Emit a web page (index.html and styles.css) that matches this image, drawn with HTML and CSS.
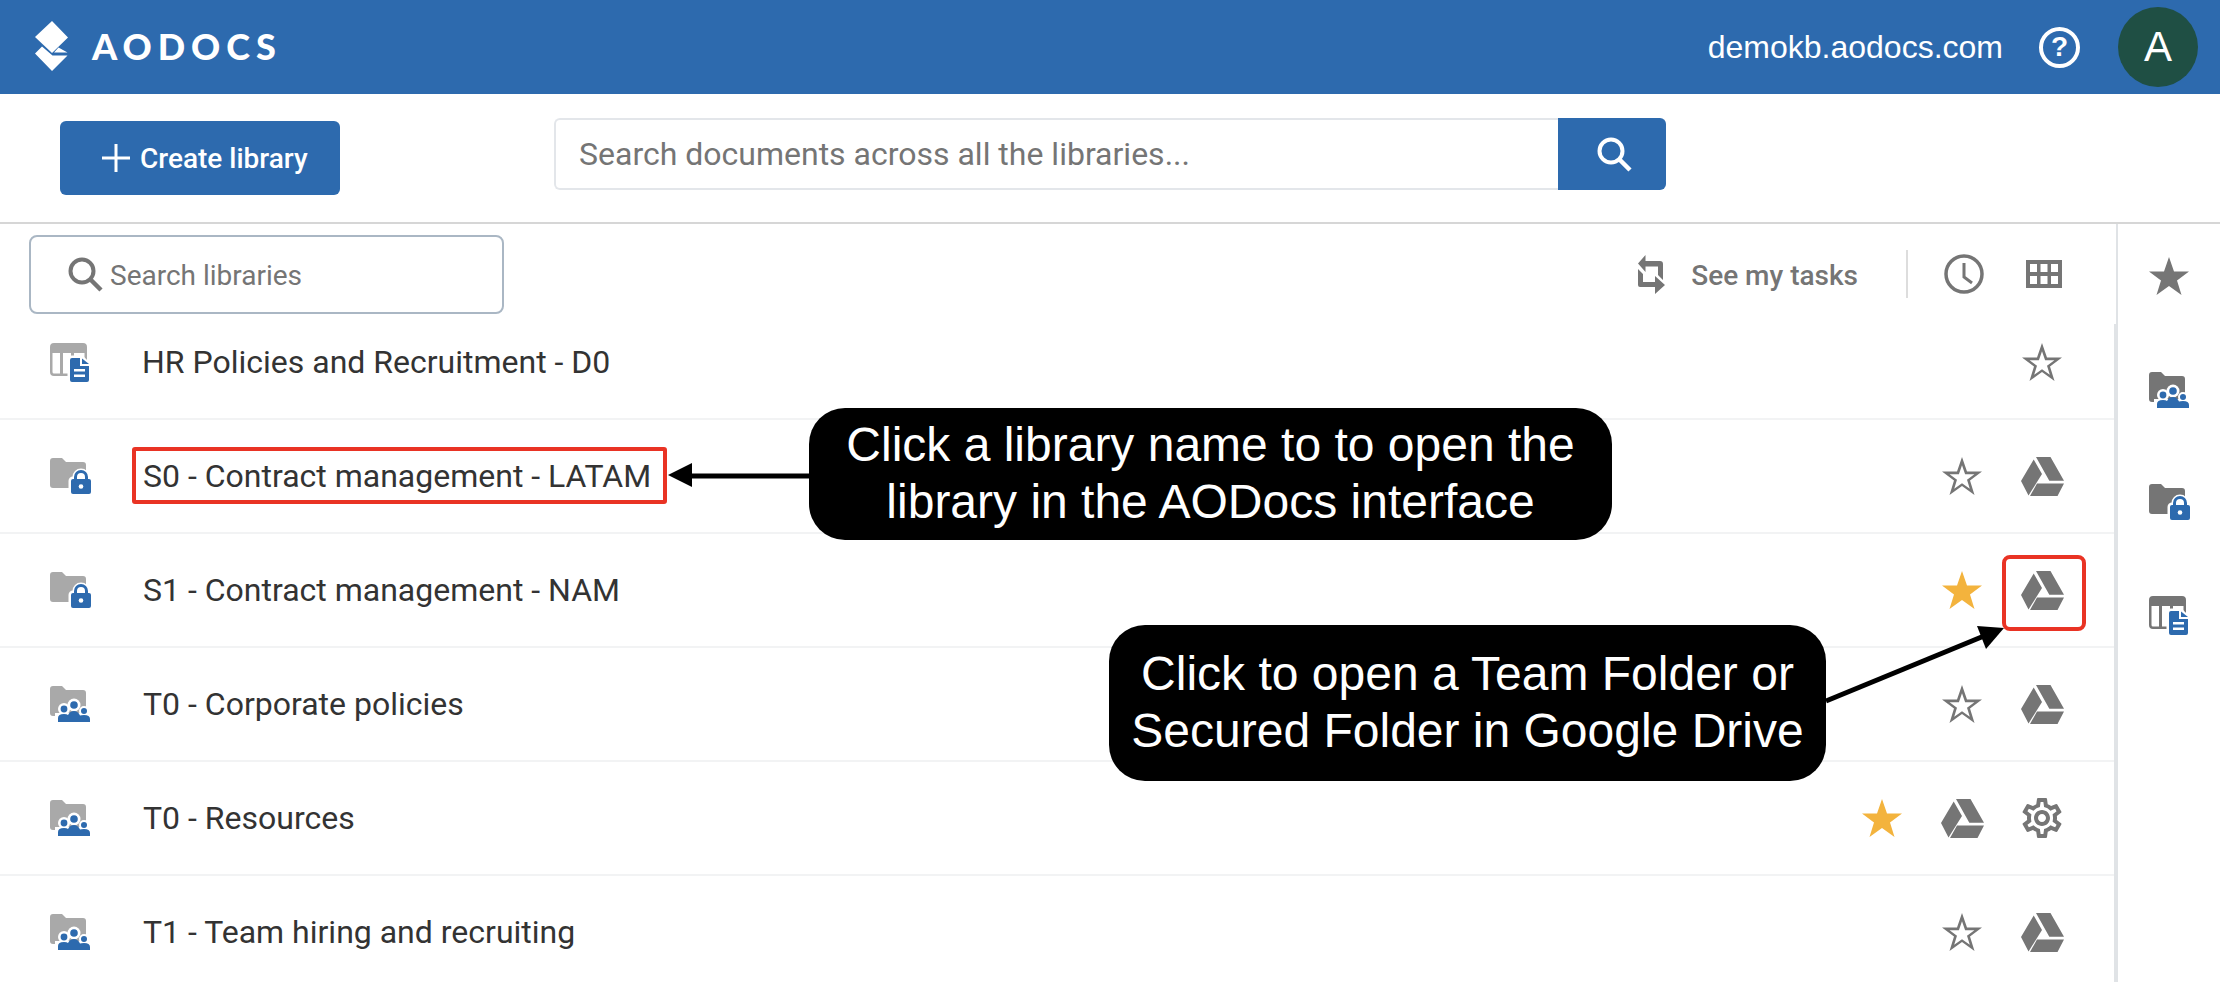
FILE: index.html
```html
<!DOCTYPE html>
<html>
<head>
<meta charset="utf-8">
<title>AODocs libraries</title>
<link rel="stylesheet" href="styles.css">
</head>
<body>

<svg class="defs" width="0" height="0">
  <symbol id="i-star" viewBox="0 0 40 38"><path fill-rule="evenodd" d="M20 0L25 14.5H40L28 23.5L32.5 38L20 29L7.5 38L12 23.5L0 14.5H15ZM20 8.2L16.9 17.2H7.6L15 22.7L12.2 31.7L20 26.2L27.8 31.7L25 22.7L32.4 17.2H23.1Z"/></symbol>
  <symbol id="i-star-full" viewBox="0 0 40 38"><path d="M20 0L25 14.5H40L28 23.5L32.5 38L20 29L7.5 38L12 23.5L0 14.5H15Z"/></symbol>
  <symbol id="i-drive" viewBox="0 0 43 39"><path d="M15 0H29.500L43 23.700H28.300ZM12.700 2.500L21 17L7.500 38.500L0 24ZM16 26.500H43L36.500 39H9Z"/></symbol>
  <symbol id="i-gear" viewBox="0 0 24 24"><path d="M19.43 12.98c.04-.32.07-.64.07-.98 0-.34-.03-.66-.07-.98l2.11-1.65c.19-.15.24-.42.12-.64l-2-3.46c-.09-.16-.26-.25-.44-.25-.06 0-.12.01-.17.03l-2.49 1c-.52-.4-1.08-.73-1.69-.98l-.38-2.65C14.46 2.18 14.25 2 14 2h-4c-.25 0-.46.18-.49.42l-.38 2.65c-.61.25-1.17.59-1.69.98l-2.49-1c-.06-.02-.12-.03-.18-.03-.17 0-.34.09-.43.25l-2 3.46c-.13.22-.07.49.12.64l2.11 1.65c-.04.32-.07.65-.07.98 0 .33.03.66.07.98l-2.11 1.65c-.19.15-.24.42-.12.64l2 3.46c.09.16.26.25.44.25.06 0 .12-.01.17-.03l2.49-1c.52.4 1.08.73 1.69.98l.38 2.65c.03.24.24.42.49.42h4c.25 0 .46-.18.49-.42l.38-2.65c.61-.25 1.17-.59 1.69-.98l2.49 1c.06.02.12.03.18.03.17 0 .34-.09.43-.25l2-3.46c.12-.22.07-.49-.12-.64l-2.11-1.65zm-1.98-1.71c.04.31.05.52.05.73 0 .21-.02.43-.05.73l-.14 1.13.89.7 1.08.84-.7 1.21-1.27-.51-1.04-.42-.9.68c-.43.32-.84.56-1.25.73l-1.06.43-.16 1.13-.2 1.35h-1.4l-.19-1.35-.16-1.13-1.06-.43c-.43-.18-.83-.41-1.23-.71l-.91-.7-1.06.43-1.27.51-.7-1.21 1.08-.84.89-.7-.14-1.13c-.03-.31-.05-.54-.05-.74s.02-.43.05-.73l.14-1.13-.89-.7-1.08-.84.7-1.21 1.27.51 1.04.42.9-.68c.43-.32.84-.56 1.25-.73l1.06-.43.16-1.13.2-1.35h1.39l.19 1.35.16 1.13 1.06.43c.43.18.83.41 1.23.71l.91.7 1.06-.43 1.27-.51.7 1.21-1.07.85-.89.7.14 1.13zM12 8c-2.21 0-4 1.79-4 4s1.79 4 4 4 4-1.79 4-4-1.79-4-4-4zm0 6c-1.1 0-2-.9-2-2s.9-2 2-2 2 .9 2 2-.9 2-2 2z"/></symbol>
  <symbol id="i-lock" viewBox="0 0 41 36">
    <path d="M3 0H12L16 4H33Q36 4 36 7V27Q36 30 33 30H3Q0 30 0 27V3Q0 0 3 0Z"/>
    <g stroke="#fff" stroke-width="5" fill="#fff"><rect x="21" y="21" width="20" height="14" rx="2"/><path d="M25 21V19A6 6 0 0 1 37 19V21Z"/></g>
    <rect x="21" y="21" width="20" height="15" rx="2" fill="#2d6aae"/>
    <path d="M25.500 22V19A5.500 5.500 0 0 1 36.500 19V22" fill="none" stroke="#2d6aae" stroke-width="3"/>
    <circle cx="31" cy="28.500" r="2.300" fill="#fff"/>
  </symbol>
  <symbol id="i-team" viewBox="0 0 41 36">
    <path d="M3 0H12L16 4H33Q36 4 36 7V27Q36 30 33 30H3Q0 30 0 27V3Q0 0 3 0Z"/>
    <g fill="#fff"><circle cx="14" cy="23" r="6"/><circle cx="24" cy="19" r="6.500"/><circle cx="34" cy="25" r="5"/><rect x="5" y="27" width="36" height="9"/></g>
    <g fill="#2d6aae">
      <circle cx="14" cy="23" r="3.400"/><circle cx="24" cy="19" r="3.800"/><circle cx="34" cy="25" r="3"/>
      <path d="M8 36V32Q8 28 14 28Q17 28 18 29Q20 25 24 25Q28 25 30 29.500Q31 29 34 29Q40 29 40 33V36Z"/>
    </g>
  </symbol>
  <symbol id="i-table" viewBox="0 0 40 39">
    <path fill-rule="evenodd" d="M4 0H33Q37 0 37 4V29Q37 33 33 33H4Q0 33 0 29V4Q0 0 4 0ZM2.500 10V29Q2.500 30.500 4 30.500H10V10ZM13 10V30.500H21V10ZM24 10V30.500H33Q34.500 30.500 34.500 29V10Z"/>
    <path d="M19 17Q19 14 22 14H32L40 22V36Q40 39 37 39H22Q19 39 19 36Z" stroke="#fff" stroke-width="3" fill="#fff"/>
    <path d="M20 17Q20 15 22 15H30V23H39V37Q39 39 37 39H22Q20 39 20 37Z" fill="#2d6aae"/>
    <path d="M32 15.500L39 21H32Z" fill="#2d6aae"/>
    <rect x="24" y="26" width="11" height="2.500" fill="#fff"/><rect x="24" y="31.500" width="11" height="2.500" fill="#fff"/>
  </symbol>
  <symbol id="i-search" viewBox="0 0 35 35"><circle cx="14" cy="14" r="11.500" fill="none" stroke="currentColor" stroke-width="4"/><path d="M22.500 22.500L33 33" stroke="currentColor" stroke-width="4.500" fill="none"/></symbol>
</svg>

<div class="header">
  <div class="brand">
    <svg class="logo" viewBox="0 0 34 50" width="34" height="50"><path fill="#fff" d="M17 0L33 16.500L17 32L0 16ZM0 32.500L7 25.500L17.500 34.500H32.500L17 50ZM23.500 26.500L32.500 31.500H19Z"/></svg>
    <span class="wordmark">AODOCS</span>
  </div>
  <div class="header-right">
    <span class="domain">demokb.aodocs.com</span>
    <span class="help">?</span>
    <span class="avatar">A</span>
  </div>
</div>

<div class="topbar">
  <div class="create-btn">
    <svg class="plus" viewBox="0 0 28 28" width="28" height="28"><path d="M14 0V28M0 14H28" stroke="#fff" stroke-width="3"/></svg>
    <span>Create library</span>
  </div>
  <div class="search">
    <div class="search-box">Search documents across all the libraries...</div>
    <div class="search-go"><svg width="35" height="35"><use href="#i-search"/></svg></div>
  </div>
</div>

<div class="content">
  <div class="main">
    <div class="tools">
      <div class="filter">
        <svg width="35" height="35"><use href="#i-search"/></svg>
        <span>Search libraries</span>
      </div>
      <div class="tools-right">
        <svg class="tasks-icon" viewBox="7 5 29 41" width="29" height="41"><path d="M8 14.500L15.500 6V12H30Q33 12 33 15V31L28 26V17.500H15.500V23ZM8 20L13 25V33H25V27L35 36L25 45V38H10Q8 38 8 36Z"/></svg>
        <span class="tasks">See my tasks</span>
        <span class="tools-sep"></span>
        <svg class="clock" viewBox="0 0 40 40" width="40" height="40"><circle cx="20" cy="20" r="18" fill="none" stroke-width="3.500"/><path d="M20 9V23L28 29" fill="none" stroke-width="3"/></svg>
        <svg class="grid-icon" viewBox="0 0 36 28" width="36" height="28"><path fill-rule="evenodd" d="M0 0H36V28H0ZM4 4V12H11V4ZM14.500 4V12H21.500V4ZM25 4V12H32V4ZM4 16V24H11V16ZM14.500 16V24H21.500V16ZM25 16V24H32V16Z"/></svg>
      </div>
    </div>

    <div class="list">
      <div class="row">
        <svg class="lib-icon" width="40" height="39"><use href="#i-table"/></svg>
        <span class="name">HR Policies and Recruitment - D0</span>
        <div class="actions">
          <span class="slot"><svg class="star" width="40" height="38"><use href="#i-star"/></svg></span>
        </div>
      </div>
      <div class="row">
        <svg class="lib-icon" width="41" height="36"><use href="#i-lock"/></svg>
        <span class="name marked">S0 - Contract management - LATAM</span>
        <div class="actions">
          <span class="slot"><svg class="star" width="40" height="38"><use href="#i-star"/></svg></span>
          <span class="slot"><svg class="drive" width="43" height="39"><use href="#i-drive"/></svg></span>
        </div>
      </div>
      <div class="row">
        <svg class="lib-icon" width="41" height="36"><use href="#i-lock"/></svg>
        <span class="name">S1 - Contract management - NAM</span>
        <div class="actions">
          <span class="slot"><svg class="star-on" width="40" height="38"><use href="#i-star-full"/></svg></span>
          <span class="slot marked-slot"><svg class="drive" width="43" height="39"><use href="#i-drive"/></svg></span>
        </div>
      </div>
      <div class="row">
        <svg class="lib-icon" width="41" height="36"><use href="#i-team"/></svg>
        <span class="name">T0 - Corporate policies</span>
        <div class="actions">
          <span class="slot"><svg class="star" width="40" height="38"><use href="#i-star"/></svg></span>
          <span class="slot"><svg class="drive" width="43" height="39"><use href="#i-drive"/></svg></span>
        </div>
      </div>
      <div class="row">
        <svg class="lib-icon" width="41" height="36"><use href="#i-team"/></svg>
        <span class="name">T0 - Resources</span>
        <div class="actions">
          <span class="slot"><svg class="star-on" width="40" height="38"><use href="#i-star-full"/></svg></span>
          <span class="slot"><svg class="drive" width="43" height="39"><use href="#i-drive"/></svg></span>
          <span class="slot"><svg class="drive" width="48" height="48"><use href="#i-gear"/></svg></span>
        </div>
      </div>
      <div class="row">
        <svg class="lib-icon" width="41" height="36"><use href="#i-team"/></svg>
        <span class="name">T1 - Team hiring and recruiting</span>
        <div class="actions">
          <span class="slot"><svg class="star" width="40" height="38"><use href="#i-star"/></svg></span>
          <span class="slot"><svg class="drive" width="43" height="39"><use href="#i-drive"/></svg></span>
        </div>
      </div>
    </div>
  </div>

  <div class="rail">
    <svg class="rail-star" width="40" height="38"><use href="#i-star-full"/></svg>
    <svg width="41" height="36"><use href="#i-team"/></svg>
    <svg width="41" height="36"><use href="#i-lock"/></svg>
    <svg width="40" height="39"><use href="#i-table"/></svg>
  </div>
</div>

<!-- annotations on top of the screenshot -->
<svg class="arrows" width="2220" height="982">
  <path d="M690 476H810" stroke="#000" stroke-width="5"/>
  <path d="M668 475L692 463V487Z"/>
  <path d="M1826 701L1984 636" stroke="#000" stroke-width="5"/>
  <path d="M2004 628L1977 626L1986 649Z"/>
</svg>
<div class="callout callout-name">Click a library name to to open the<br>library in the AODocs interface</div>
<div class="callout callout-drive">Click to open a Team Folder or<br>Secured Folder in Google Drive</div>

</body>
</html>
```

FILE: styles.css
```css
* { margin:0; padding:0; box-sizing:border-box; }
html, body { width:100%; height:982px; overflow:hidden; }
body { background:#fff; font-family:Roboto, "Liberation Sans", sans-serif; color:#333; position:relative; }
.defs { position:absolute; }

/* blue header */
.header { height:94px; background:#2d6aae; display:flex; align-items:center; justify-content:space-between; color:#fff; padding:0 22px 0 35px; }
.brand { display:flex; align-items:center; gap:23px; }
.logo { margin-top:-2px; }
.wordmark { font-family:Lato, sans-serif; font-weight:900; font-size:36px; letter-spacing:6px; line-height:1; margin-top:-3px; }
.header-right { display:flex; align-items:center; }
.domain { font-family:"Liberation Sans", sans-serif; font-size:32px; }
.help { width:41px; height:41px; border:4px solid #fff; border-radius:50%; margin-left:36px; display:flex; align-items:center; justify-content:center; font:700 28px "Liberation Sans", sans-serif; }
.avatar { width:80px; height:80px; border-radius:50%; background:#1f4f44; margin-left:38px; display:flex; align-items:center; justify-content:center; font-family:"Liberation Sans", sans-serif; font-size:42px; }

/* create + global search */
.topbar { height:130px; border-bottom:2px solid #d6d6d6; display:flex; align-items:flex-start; padding-left:60px; }
.create-btn { width:280px; height:74px; margin-top:27px; background:#2d6aae; border-radius:6px; color:#fff; display:flex; align-items:center; padding-left:42px; gap:10px; font-size:28px; font-weight:500; }
.search { display:flex; margin-top:24px; margin-left:214px; height:72px; }
.search-box { width:1004px; border:2px solid #e3e6ea; border-right:0; border-radius:6px 0 0 6px; padding-left:23px; line-height:68px; font-size:32px; color:#757575; }
.search-go { width:108px; background:#2d6aae; border-radius:0 6px 6px 0; color:#fff; display:flex; align-items:center; justify-content:center; padding-left:4px; }

/* body */
.content { display:flex; height:758px; }
.main { width:2116px; display:flex; flex-direction:column; }
.tools { height:100px; flex:none; display:flex; align-items:center; justify-content:space-between; padding-left:29px; padding-right:54px; }
.filter { width:475px; height:79px; border:2px solid #aab7c4; border-radius:8px; display:flex; align-items:center; padding-left:37px; gap:7px; font-size:28px; color:#757575; }
.filter span { margin-top:2px; }
.tools-right { display:flex; align-items:center; color:#757575; }
.tools-right svg { fill:#757575; stroke:#757575; }
.tools-right .tasks-icon, .tools-right .grid-icon { stroke:none; }
.tasks { font-size:28px; font-weight:500; margin-left:25px; margin-top:2px; }
.tools-sep { width:2px; height:48px; background:#ddd; margin:0 36px 0 48px; }
.grid-icon { margin-left:42px; }

/* library rows */
.list { flex:1; overflow:hidden; border-right:2px solid #e0e3e6; }
.row { height:114px; border-bottom:2px solid #f2f3f4; display:flex; align-items:center; padding:0 32px 0 50px; }
.row:first-child { margin-top:-18px; }
.lib-icon { flex:none; fill:#a9a9a9; }
.name { font-size:32px; margin-left:52px; }
.marked { position:relative; }
.marked::after { content:""; position:absolute; left:-11px; right:-16px; top:-10px; bottom:-9px; border:4px solid #e93324; border-radius:3px; }
.actions { margin-left:auto; display:flex; }
.slot { width:80px; height:76px; display:flex; align-items:center; justify-content:center; position:relative; }
.star, .drive { fill:#757575; }
.star-on { fill:#f3b33d; }
.marked-slot::after { content:""; position:absolute; left:0; right:-4px; top:3px; bottom:-3px; border:4px solid #e93324; border-radius:8px; }

/* right rail */
.rail { width:104px; border-left:2px solid #e0e3e6; display:flex; flex-direction:column; align-items:center; gap:76px; padding:33px 0 0; fill:#757575; }
.rail-star { margin-bottom:1px; }

/* callouts */
.arrows { position:absolute; left:0; top:0; }
.callout { position:absolute; background:#000; color:#fff; border-radius:36px; font-family:"Liberation Sans", sans-serif; font-size:48px; line-height:57px; text-align:center; display:flex; align-items:center; justify-content:center; }
.callout-name { left:809px; top:408px; width:803px; height:132px; padding-bottom:3px; }
.callout-drive { left:1109px; top:625px; width:717px; height:156px; padding-bottom:2px; }
```
